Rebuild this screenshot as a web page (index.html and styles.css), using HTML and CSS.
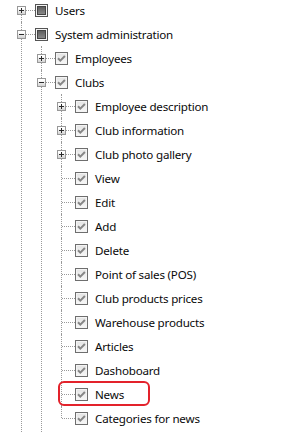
FILE: index.html
```html
<!DOCTYPE html>
<html lang="en">
<head>
    <meta charset="UTF-8">
    <meta name="viewport" content="width=device-width, initial-scale=1.0">
    <title>Permissions tree</title>
    <link rel="stylesheet" href="styles.css">
</head>
<body>

    <ul class="tree">
        <li>
            <div class="row">
                <span class="exp plus"></span><span class="link"></span>
                <span class="check partial"><i></i></span>
                <span class="label">Users</span>
            </div>
        </li>
        <li class="open">
            <div class="row">
                <span class="exp minus"></span><span class="link"></span>
                <span class="check partial"><i></i></span>
                <span class="label">System administration</span>
            </div>
            <ul>
                <li>
                    <div class="row">
                        <span class="exp plus"></span><span class="link"></span>
                        <span class="check on"></span>
                        <span class="label">Employees</span>
                    </div>
                </li>
                <li class="open">
                    <div class="row">
                        <span class="exp minus"></span><span class="link"></span>
                        <span class="check on"></span>
                        <span class="label">Clubs</span>
                    </div>
                    <ul>
                        <li>
                            <div class="row">
                                <span class="exp plus"></span><span class="link"></span>
                                <span class="check on"></span>
                                <span class="label">Employee description</span>
                            </div>
                        </li>
                        <li>
                            <div class="row">
                                <span class="exp plus"></span><span class="link"></span>
                                <span class="check on"></span>
                                <span class="label">Club information</span>
                            </div>
                        </li>
                        <li>
                            <div class="row">
                                <span class="exp plus"></span><span class="link"></span>
                                <span class="check on"></span>
                                <span class="label">Club photo gallery</span>
                            </div>
                        </li>
                        <li><div class="row leaf"><span class="link"></span><span class="check on"></span><span class="label">View</span></div></li>
                        <li><div class="row leaf"><span class="link"></span><span class="check on"></span><span class="label">Edit</span></div></li>
                        <li><div class="row leaf"><span class="link"></span><span class="check on"></span><span class="label">Add</span></div></li>
                        <li><div class="row leaf"><span class="link"></span><span class="check on"></span><span class="label">Delete</span></div></li>
                        <li><div class="row leaf"><span class="link"></span><span class="check on"></span><span class="label">Point of sales (POS)</span></div></li>
                        <li><div class="row leaf"><span class="link"></span><span class="check on"></span><span class="label">Club products prices</span></div></li>
                        <li><div class="row leaf"><span class="link"></span><span class="check on"></span><span class="label">Warehouse products</span></div></li>
                        <li><div class="row leaf"><span class="link"></span><span class="check on"></span><span class="label">Articles</span></div></li>
                        <li><div class="row leaf"><span class="link"></span><span class="check on"></span><span class="label">Dashoboard</span></div></li>
                        <li class="marked"><div class="row leaf"><span class="link"></span><span class="check on"></span><span class="label">News</span></div></li>
                        <li class="last"><div class="row leaf"><span class="link"></span><span class="check on"></span><span class="label">Categories for news</span></div></li>
                    </ul>
                </li>
            </ul>
        </li>
    </ul>

</body>
</html>
```

FILE: styles.css
```css
html, body {
    overflow: hidden;
}

body {
    margin: 0;
    background: #fff;
    font-family: "Noto Sans", "Open Sans", sans-serif;
    font-size: 11.6px;
    letter-spacing: -0.2px;
    color: #0a0a0a;
}

.tree,
.tree ul {
    list-style: none;
    margin: 0;
    padding: 0;
}

.tree {
    margin-top: -2px;
}

.tree ul {
    padding-left: 20px;
}

/* pad the open branches so the sibling lines run to the bottom edge */
.tree > li.open > ul > li.open > ul {
    padding-bottom: 8px;
}

.tree li {
    position: relative;
}

/* vertical dotted line joining siblings */
.tree li::before {
    content: "";
    position: absolute;
    left: 21px;
    top: 0;
    bottom: 0;
    border-left: 1px dotted #9a9a9a;
}

.tree li.last::before {
    bottom: auto;
    height: 12px;
}

.tree > li:first-child::before {
    top: 12px;
}

.row {
    display: flex;
    align-items: center;
    height: 24px;
}

.exp {
    position: relative;
    box-sizing: border-box;
    width: 9px;
    height: 9px;
    margin-left: 17px;
    border: 1px solid #989898;
    background: linear-gradient(#ffffff 20%, #d2d2d2);
}

.exp::before,
.exp::after {
    content: "";
    position: absolute;
    background: #2a2a2a;
}

.exp::before {
    left: 1px;
    top: 3px;
    width: 5px;
    height: 1px;
}

.exp.plus::after {
    left: 3px;
    top: 1px;
    width: 1px;
    height: 5px;
}

.link {
    width: 9px;
    height: 0;
    border-top: 1px dotted #9a9a9a;
}

.leaf .link {
    width: 13px;
    margin-left: 22px;
}

.check {
    position: relative;
    box-sizing: border-box;
    width: 13px;
    height: 13px;
    border: 1px solid #6e6e6e;
    background: linear-gradient(#e4e4e4, #f7f7f7);
    box-shadow: inset 0 0 0 1px #f4f4f4;
}

.check.on {
    background-image: url("data:image/svg+xml;utf8,<svg xmlns='http://www.w3.org/2000/svg' width='11' height='11'><polyline points='2,5.3 4.3,7.6 8.9,3' fill='none' stroke='%23868686' stroke-width='2'/></svg>"), linear-gradient(#e4e4e4, #f7f7f7);
}

.check.partial {
    display: flex;
    align-items: center;
    justify-content: center;
    border-color: #555;
    background: #f4f4f4;
}

.check.partial i {
    box-sizing: border-box;
    width: 9px;
    height: 9px;
    border: 1px solid #444;
    background: linear-gradient(#5e5e5e, #888);
}

.label {
    margin-left: 7px;
    white-space: nowrap;
}

/* red annotation round the News item */
.marked .row::after {
    content: "";
    position: absolute;
    left: 18px;
    top: -1px;
    width: 92px;
    height: 25px;
    box-sizing: border-box;
    border: 2px solid #e3222b;
    border-radius: 6px;
}
```
